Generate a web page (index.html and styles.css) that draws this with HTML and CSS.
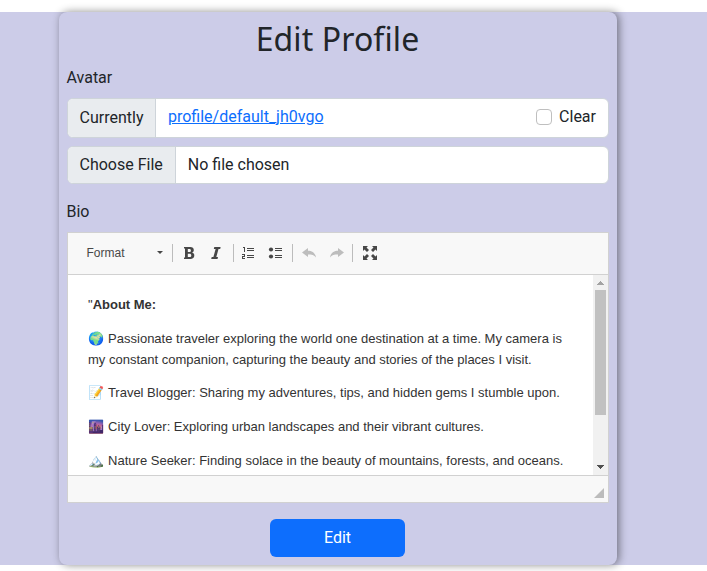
FILE: index.html
```html
<!DOCTYPE html>
<html lang="en">
<head>
<meta charset="utf-8">
<title>Edit Profile</title>
<link rel="stylesheet" href="styles.css">
</head>
<body>
<main class="page">
<form class="card">
  <h1 class="title">Edit Profile</h1>
  <div class="label">Avatar</div>
  <div class="group current">
    <span class="addon">Currently</span>
    <div class="value"><a class="link" href="#">profile/default_jh0vgo</a>
      <label class="clear"><input type="checkbox" class="check">Clear</label></div>
  </div>
  <div class="group file">
    <span class="addon">Choose File</span>
    <div class="value">No file chosen</div>
  </div>
  <div class="label bio">Bio</div>
  <div class="editor">
    <div class="toolbar">
      <span class="format">Format</span><i class="caret"></i>
      <i class="sep"></i>
      <svg class="icon bold" viewBox="0 0 16 16"><path fill-rule="evenodd" d="M3 2h6.200c2.300 0 3.600 1.100 3.600 3 0 1.300-.7 2.200-1.800 2.600 1.500.4 2.300 1.400 2.300 2.900 0 2.300-1.500 3.500-4 3.500H3v-1.500h1V3.500H3zM6.800 3.900v3h1.500c1.100 0 1.600-.5 1.600-1.500s-.5-1.500-1.600-1.500zM6.800 8.700v3.400h1.700c1.200 0 1.800-.6 1.800-1.700s-.6-1.700-1.800-1.700z"/></svg>
      <svg class="icon italic" viewBox="0 0 16 16"><path d="M6.300 2h6.300l-.4 1.900h-1.700L8.300 12.100H10L9.500 14H3.200l.5-1.900h1.700L7.600 3.900H5.800z"/></svg>
      <i class="sep"></i>
      <svg class="icon numbered" viewBox="0 0 16 16"><path d="M7 3h7v1H7zM7 5h7v1H7zM7 10h7v1H7zM7 12h7v1H7zM3 2h2v5H4V3H3zM2 9h3v3H3v1h2v1H2v-3h2v-1H2z"/></svg>
      <svg class="icon bulleted" viewBox="0 0 16 16"><path d="M7 3h7v1H7zM7 5h7v1H7zM7 10h7v1H7zM7 12h7v1H7z"/><circle cx="3" cy="4.500" r="2.100"/><circle cx="3" cy="11.500" r="2.100"/></svg>
      <i class="sep"></i>
      <svg class="icon undo" viewBox="0 0 16 16"><path d="M1 7.500 7 3v2.700c4 0 7.300 2 8 6.800-2-2.400-4.500-3-8-2.900V12z"/></svg>
      <svg class="icon redo" viewBox="0 0 16 16"><path d="M15 7.500 9 3v2.700c-4 0-7.300 2-8 6.800 2-2.400 4.500-3 8-2.900V12z"/></svg>
      <i class="sep"></i>
      <svg class="icon maximize" viewBox="0 0 16 16"><path d="M1 1h5L4.500 2.500 7 5 5 7 2.500 4.500 1 6z"/><path d="M15 1v5l-1.500-1.500L11 7 9 5l2.500-2.500L10 1zM15 15h-5l1.500-1.500L9 11l2-2 2.500 2.500L15 10zM1 15v-5l1.500 1.500L5 9l2 2-2.500 2.500L6 15z"/></svg>
    </div>
    <div class="content">
      <div class="copy">
        <p>"<b>About Me:</b></p>
        <p><span class="emoji">🌍</span> Passionate traveler exploring the world one destination at a time. My camera is my constant companion, capturing the beauty and stories of the places I visit.</p>
        <p><span class="emoji">📝</span> Travel Blogger: Sharing my adventures, tips, and hidden gems I stumble upon.</p>
        <p><span class="emoji">🌆</span> City Lover: Exploring urban landscapes and their vibrant cultures.</p>
        <p><span class="emoji">🏔️</span> Nature Seeker: Finding solace in the beauty of mountains, forests, and oceans.</p>
      </div>
      <div class="scrollbar">
        <svg class="up" viewBox="0 0 7 4"><path d="M3 0h1v1h1v1h1v1h1v1H0V3h1V2h1V1h1z"/></svg>
        <i class="thumb"></i>
        <svg class="down" viewBox="0 0 7 4"><path d="M0 0h7v1H6v1H5v1H4v1H3V3H2V2H1V1H0z"/></svg>
      </div>
    </div>
    <div class="footer"><i class="grip"></i></div>
  </div>
  <button type="button" class="submit">Edit</button>
</form>
</main>
</body>
</html>
```
FILE: styles.css
```css
* { box-sizing: border-box; }
html { background: #fff; }
body { margin: 0; padding: 12px 0 6px; color: #212529; font: 16px/24px Roboto, sans-serif; }
.page { height: 553px; padding-left: 59px; background: #cccce8; }
.card { width: 558px; height: 553px; padding: 8px 8px 0; border-radius: 8px; background: #cccce8; box-shadow: 2px 0 8px rgba(0,0,0,.45); }
.title { height: 38px; margin: 0 0 8px; padding-right: 1px; text-align: center; font: 400 32px/38px "Noto Sans", sans-serif; letter-spacing: .1px; }
.label { height: 24px; margin-left: -.5px; }
.group { display: flex; border: 1px solid #ced4da; border-radius: 6px; background: #fff; overflow: hidden; width: 542px; }
.current { height: 40px; margin-top: 8px; }
.file { height: 38px; margin-top: 8px; }
.addon { display: flex; align-items: center; padding: 0 12px 0 11.500px; background: #e9ecef; border-right: 1px solid #ced4da; }
.current .addon { padding-right: 11.500px; }
.value { flex: 1; display: flex; align-items: center; justify-content: space-between; padding: 0 12px; }
.current .value { padding-bottom: 2px; }
.link { color: #0d6efd; text-decoration: underline; }
.clear { display: flex; align-items: center; gap: 7.500px; }
.check { appearance: none; width: 16px; height: 16px; margin: 0; border: 1px solid #bfbfbf; border-radius: 4px; background: #fff; }
.bio { margin-top: 16px; }
.editor { width: 542px; height: 271px; margin-top: 8px; border: 1px solid #d1d1d1; background: #fff; font-family: "Liberation Sans", sans-serif; color: #333; }
.toolbar { display: flex; align-items: center; height: 42px; padding: 0 0 2px 18.500px; border-bottom: 1px solid #d1d1d1; background: #f8f8f8; }
.format { width: 70.500px; font-size: 12px; line-height: 20px; color: #484848; }
.caret { width: 0; border: 3px solid transparent; border-top-color: #474747; border-bottom: 0; margin-right: 9px; }
.sep { width: 1px; height: 18px; background: #bcbcbc; }
.icon { width: 16px; height: 16px; flex: none; fill: #474747; }
.bold { margin: 0 11px 0 8px; }
.italic { margin-right: 9px; }
.numbered { margin: 0 12px 0 6px; }
.bulleted { margin-right: 8px; }
.undo { margin: 0 12px 0 8px; fill: #bdbdbd; }
.redo { margin-right: 7px; fill: #bdbdbd; }
.maximize { margin-left: 9px; }
.content { display: flex; height: 200px; overflow: hidden; }
.copy { flex: 1; padding: 20px 20px 0; font-size: 13px; line-height: 20.8px; }
.copy p { margin: 0 0 13px; }
.emoji { margin-right: .5px; }
.scrollbar { width: 15px; background: #f1f1f1; display: flex; flex-direction: column; align-items: center; }
.up { width: 7px; height: 4px; margin-top: 6px; fill: #a3a3a3; }
.thumb { width: 11px; height: 125px; margin-top: 5px; background: #c1c1c1; }
.down { width: 7px; height: 4px; margin-top: 50px; fill: #505050; }
.footer { height: 27px; border-top: 1px solid #d1d1d1; background: #f8f8f8; display: flex; justify-content: flex-end; align-items: flex-end; padding: 0 4px 4px; }
.grip { border-left: 10px solid transparent; border-bottom: 10px solid #bcbcbc; }
.submit { display: block; width: 135px; height: 38px; margin: 16px 0 0 203px; padding: 0; border: 0; border-radius: 6px; background: #0d6efd; color: #fff; font: 16px/24px Roboto, sans-serif; }
```
